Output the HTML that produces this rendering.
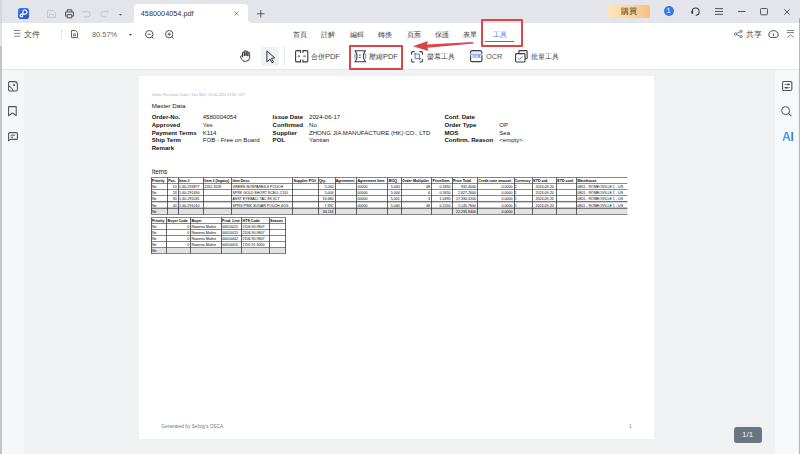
<!DOCTYPE html>
<html><head><meta charset="utf-8">
<style>
*{margin:0;padding:0;box-sizing:border-box}
html,body{width:800px;height:454px;overflow:hidden;background:#f0f1f3;font-family:"Liberation Sans",sans-serif;position:relative}
.a{position:absolute}
svg{position:absolute;overflow:visible}
.tabbar{left:0;top:0;width:800px;height:23px;background:#e4e5ea}
.toolbar{left:0;top:23px;width:800px;height:47px;background:#fff;border-bottom:1px solid #e6e7ea}
.t{position:absolute;white-space:nowrap;font-family:"Liberation Sans",sans-serif;line-height:1}
.cj{position:absolute;white-space:nowrap;font-size:7.4px;line-height:8px;color:#444;font-weight:500}
.content{left:0;top:70px;width:800px;height:384px;background:#f0f1f3}
.lside{left:2px;top:70px;width:22.3px;height:385px;background:#f5f6f8}
.rside{left:775px;top:70px;width:23px;height:385px;background:#f7f8fa}
.page{left:138.8px;top:76.4px;width:515.2px;height:362.3px;background:#fff}
</style></head><body>
<!-- tab bar -->
<div class="a tabbar"></div>
<div class="a" style="left:18px;top:8px;width:11px;height:10.8px;border-radius:2.8px;background:linear-gradient(135deg,#3b78f6,#2750dc)"></div>
<svg style="left:18px;top:8px" width="11" height="11" viewBox="0 0 11 11"><circle cx="3.5" cy="7.4" r="1.25" fill="none" stroke="#fff" stroke-width="1.2"/><path d="M4.4 6.5 L5.4 2.7 A2.05 2.05 0 1 1 6.5 6 L5.6 6.2" fill="none" stroke="#fff" stroke-width="1.2" stroke-linecap="round"/><circle cx="6.9" cy="4" r="0.7" fill="#1f3fb0"/></svg>
<!-- save disabled -->
<svg style="left:47px;top:10px" width="9" height="8" viewBox="0 0 9 8"><path d="M1 0.5 H6 L8.5 3 V7.5 H0.5 V1 Z M2.5 7.5 V4.5 H6.5 V7.5" fill="none" stroke="#c6c7cc" stroke-width="0.95"/></svg>
<!-- print -->
<svg style="left:64.5px;top:9px" width="9" height="9.5" viewBox="0 0 9 9.5"><path d="M2.2 3 V0.8 H6.8 V3 M1.8 7.2 H0.6 V3 H8.4 V7.2 H7.2 M2.2 5.6 H6.8 V8.8 H2.2 Z" fill="none" stroke="#505050" stroke-width="1" stroke-linejoin="round"/></svg>
<!-- undo/redo disabled -->
<svg style="left:82.3px;top:10.8px" width="9" height="6.5" viewBox="0 0 9 6.5"><path d="M0.6 0.7 H5.6 A2.55 2.55 0 0 1 5.6 5.8 H1.8" fill="none" stroke="#c4c5ca" stroke-width="1"/><path d="M0.6 0.7 L1.8 -0.1 M0.6 0.7 L1.8 1.5" stroke="#c4c5ca" stroke-width="0.8"/></svg>
<svg style="left:99.8px;top:10.8px" width="9" height="6.5" viewBox="0 0 9 6.5"><path d="M8.4 0.7 H3.4 A2.55 2.55 0 0 0 3.4 5.8 H7.2" fill="none" stroke="#c4c5ca" stroke-width="1"/><path d="M8.4 0.7 L7.2 -0.1 M8.4 0.7 L7.2 1.5" stroke="#c4c5ca" stroke-width="0.8"/></svg>
<svg style="left:119px;top:13.5px" width="3" height="2" viewBox="0 0 3 2"><path d="M0 0 H3 L1.5 1.8Z" fill="#555"/></svg>
<!-- doc tab -->
<div class="a" style="left:130px;top:19px;width:122px;height:4px;background:#fff"></div>
<div class="a" style="left:126px;top:15px;width:8px;height:8px;background:#e4e5ea;border-bottom-right-radius:4px"></div>
<div class="a" style="left:247.5px;top:15px;width:8px;height:8px;background:#e4e5ea;border-bottom-left-radius:4px"></div>
<div class="a" style="left:134px;top:4.3px;width:113.5px;height:19px;background:#fff;border-radius:4px 4px 0 0"></div>
<div class="t" style="left:140.8px;top:9.8px;font-size:7.3px;color:#333">4580004054.pdf</div>
<svg style="left:234px;top:11px" width="5" height="5" viewBox="0 0 5 5"><path d="M0.5 0.5 L4.5 4.5 M4.5 0.5 L0.5 4.5" stroke="#777" stroke-width="0.8"/></svg>
<svg style="left:256.75px;top:9.75px" width="7.5" height="7.5" viewBox="0 0 7.5 7.5"><path d="M3.75 0 V7.5 M0 3.75 H7.5" stroke="#444" stroke-width="0.85"/></svg>
<!-- buy button -->
<div class="a" style="left:608px;top:4.75px;width:42px;height:12.75px;border-radius:2.5px;background:linear-gradient(90deg,#fde6b8,#fbd29a 60%,#f9be86)"></div>
<div class="cj" style="left:620.5px;top:8.2px;font-size:7.6px;color:#4a3015">購買</div>
<!-- badge -->
<div class="a" style="left:663.5px;top:6.2px;width:10.2px;height:10.2px;border-radius:50%;background:#3a78ee"></div>
<div class="t" style="left:666.6px;top:7.3px;font-size:7.5px;color:#fff">1</div>
<!-- headset/refresh -->
<svg style="left:691.2px;top:6.5px" width="9.5" height="9.5" viewBox="0 0 9.5 9.5"><path d="M1.2 5.6 V4.4 A3.45 3.45 0 0 1 8.1 4.4 V5.2 Q8.1 8 5 8.3" fill="none" stroke="#3f3f3f" stroke-width="1.05" stroke-linecap="round"/><path d="M1.3 4.6 V5.9" stroke="#333" stroke-width="1.7" stroke-linecap="round"/></svg>
<!-- menu -->
<svg style="left:715px;top:8px" width="8" height="7" viewBox="0 0 8 7"><path d="M0 0.6 H8 M0 3.5 H8 M0 6.4 H8" stroke="#555" stroke-width="1"/></svg>
<svg style="left:737.5px;top:11px" width="7.5" height="1" viewBox="0 0 7.5 1"><path d="M0 0.5 H7.5" stroke="#555" stroke-width="1"/></svg>
<svg style="left:760px;top:7.75px" width="8" height="7" viewBox="0 0 8 7"><rect x="0.5" y="0.5" width="7" height="6.3" rx="1" fill="none" stroke="#555" stroke-width="1"/></svg>
<svg style="left:784px;top:8.5px" width="6" height="6" viewBox="0 0 6 6"><path d="M0.3 0.3 L5.7 5.7 M5.7 0.3 L0.3 5.7" stroke="#555" stroke-width="1"/></svg>
<div class="a" style="left:798.5px;top:17.5px;width:1.5px;height:6px;background:#aaa"></div>

<!-- toolbar -->
<div class="a toolbar"></div>
<div class="a content"></div>
<div class="a" style="left:0;top:0;width:1.5px;height:23px;background:#d6d7dc"></div>
<div class="a" style="left:0;top:23px;width:1.5px;height:23px;background:#e2e2e2"></div>
<div class="a" style="left:0;top:46px;width:2px;height:408px;background:#c4c4c4"></div>
<div class="a" style="left:798.5px;top:23px;width:1.5px;height:431px;background:#b8b8b8"></div>

<!-- row1 left -->
<svg style="left:14px;top:30.3px" width="6.4" height="7" viewBox="0 0 6.4 7"><path d="M0 0.5 H6.4 M0 3.35 H6.4 M0 6.2 H6.4" stroke="#666" stroke-width="0.8"/></svg>
<div class="cj" style="left:24.4px;top:30.7px;font-size:7.6px">文件</div>
<div class="a" style="left:61px;top:29px;width:1px;height:10px;background:#e3e3e6"></div>
<svg style="left:71px;top:30px" width="8" height="9" viewBox="0 0 8 9"><path d="M0.5 0.5 H4.5 L6.5 2.5 V7.5 H0.5 Z M2 4 H5 M2 5.7 H5" fill="none" stroke="#555" stroke-width="0.9"/><path d="M7 8 L7.8 8.8" stroke="#555" stroke-width="0.6"/></svg>
<div class="t" style="left:92px;top:30.5px;font-size:7.4px;color:#666">80.57%</div>
<svg style="left:129px;top:33.5px" width="3" height="2" viewBox="0 0 3 2"><path d="M0 0 H3 L1.5 1.8Z" fill="#333"/></svg>
<svg style="left:145px;top:30px" width="9" height="9" viewBox="0 0 9 9"><circle cx="4.2" cy="4.2" r="3.7" fill="none" stroke="#444" stroke-width="0.9"/><path d="M2.6 4.2 H5.8 M7 7 L8.6 8.6" stroke="#444" stroke-width="0.9"/></svg>
<svg style="left:165px;top:30px" width="9" height="9" viewBox="0 0 9 9"><circle cx="4.2" cy="4.2" r="3.7" fill="none" stroke="#444" stroke-width="0.9"/><path d="M2.6 4.2 H5.8 M4.2 2.6 V5.8 M7 7 L8.6 8.6" stroke="#444" stroke-width="0.9"/></svg>

<!-- menu tabs -->
<div class="cj" style="left:293px;top:31px">首頁</div>
<div class="cj" style="left:321px;top:31px">註解</div>
<div class="cj" style="left:350px;top:31px">編輯</div>
<div class="cj" style="left:378px;top:31px">轉換</div>
<div class="cj" style="left:407px;top:31px">頁面</div>
<div class="cj" style="left:435px;top:31px">保護</div>
<div class="cj" style="left:463px;top:31px">表單</div>
<div class="cj" style="left:492.7px;top:30.8px;color:#4f76e0">工具</div>
<div class="a" style="left:485px;top:40.6px;width:29px;height:1.2px;background:#4a6fd6"></div>
<!-- red box -->
<div class="a" style="left:481px;top:19px;width:42px;height:27.5px;border:2px solid #da4548;border-radius:1px"></div>

<!-- right share -->
<svg style="left:734px;top:30px" width="9" height="8" viewBox="0 0 9 8"><circle cx="1.6" cy="4" r="1.2" fill="none" stroke="#555" stroke-width="0.8"/><circle cx="7.2" cy="1.3" r="1.1" fill="none" stroke="#555" stroke-width="0.8"/><circle cx="7.2" cy="6.7" r="1.1" fill="none" stroke="#555" stroke-width="0.8"/><path d="M2.7 3.4 L6.2 1.8 M2.7 4.6 L6.2 6.2" stroke="#555" stroke-width="0.8"/></svg>
<div class="cj" style="left:746.3px;top:31px;font-size:7.7px">共享</div>
<svg style="left:767.8px;top:30.2px" width="11" height="8" viewBox="0 0 11 8"><path d="M0.8 5.1 C0.8 2.4 2.9 0.6 5.5 0.6 C8.1 0.6 10.2 2.4 10.2 5.1 C10.2 6.4 9.3 7.4 8 7.4 H3 C1.7 7.4 0.8 6.4 0.8 5.1 Z" fill="none" stroke="#444" stroke-width="0.95"/><path d="M5.5 6.2 V3.8" stroke="#444" stroke-width="0.8"/><path d="M4.5 4.5 L5.5 3.4 L6.5 4.5 Z" fill="#444"/></svg>
<svg style="left:786.5px;top:30px" width="7" height="8" viewBox="0 0 7 8"><path d="M0 0.5 H7 M0 2.5 H7 M0.3 7.5 L3.5 4.8 L6.7 7.5" fill="none" stroke="#666" stroke-width="0.8"/></svg>

<!-- row2 tools -->
<svg style="left:239.5px;top:50px" width="11" height="12" viewBox="0 0 11 12"><path d="M2.5 6.5 V2.8 A0.9 0.9 0 0 1 4.3 2.8 V5.5 M4.3 5.5 V1.4 A0.9 0.9 0 0 1 6.1 1.4 V5.5 M6.1 5.5 V2 A0.9 0.9 0 0 1 7.9 2 V5.8 M7.9 5.8 V3.2 A0.9 0.9 0 0 1 9.7 3.2 V7.5 A4 4 0 0 1 5.7 11.3 H5 A4 4 0 0 1 1.5 9.2 L0.5 7.2 A0.9 0.9 0 0 1 2.2 6.4 L2.5 7" fill="none" stroke="#333" stroke-width="0.95" stroke-linejoin="round" stroke-linecap="round"/></svg>
<div class="a" style="left:260.9px;top:47.1px;width:18.1px;height:18.5px;background:#f0f1f4;border-radius:1.5px"></div>
<svg style="left:265.6px;top:49.6px" width="10" height="13.5" viewBox="0 0 10 13.5"><path d="M0.9 0.9 L8.8 7.9 L5.5 8.3 L7.5 12 L6 12.8 L4.1 9.1 L0.9 11.9 Z" fill="none" stroke="#333" stroke-width="1" stroke-linejoin="round"/></svg>
<div class="a" style="left:284px;top:46px;width:1px;height:20px;background:#e6e7ea"></div>
<!-- merge -->
<svg style="left:295px;top:50px" width="13.5" height="12.5" viewBox="0 0 13.5 12.5"><path d="M5.5 3.1 V0.6 H1.5 A0.9 0.9 0 0 0 0.6 1.5 V11 A0.9 0.9 0 0 0 1.5 11.9 H5.5 V9.4 M7.9 3.1 V0.6 H11.9 A0.9 0.9 0 0 1 12.8 1.5 V11 A0.9 0.9 0 0 1 11.9 11.9 H7.9 V9.4" fill="none" stroke="#3a3a3a" stroke-width="1.1"/><path d="M2.2 6.25 L3.8 5.1 V7.4 Z M11.2 6.25 L9.6 5.1 V7.4 Z" fill="#6b8fe6"/><circle cx="4.3" cy="6.25" r="0.95" fill="#6b8fe6"/><circle cx="9.1" cy="6.25" r="0.95" fill="#6b8fe6"/></svg>
<div class="cj" style="left:311px;top:53px">合併PDF</div>
<!-- compress -->
<svg style="left:353.5px;top:50px" width="12.5" height="12.5" viewBox="0 0 12.5 12.5"><path d="M1 0.7 H11.5 Q9.4 3.2 9.4 6.25 Q9.4 9.3 11.5 11.8 H1 Q3.1 9.3 3.1 6.25 Q3.1 3.2 1 0.7 Z" fill="none" stroke="#3a3a3a" stroke-width="1.1" stroke-linejoin="round"/><path d="M1.2 3.8 Q0.2 6.25 1.2 8.7 M11.3 3.8 Q12.3 6.25 11.3 8.7" fill="none" stroke="#7fa4ee" stroke-width="1.3"/><path d="M4.8 5.2 H6.8 M4.8 7.4 H6.8" stroke="#444" stroke-width="0.9"/></svg>
<div class="cj" style="left:369px;top:53px">壓縮PDF</div>
<!-- red box 2 -->
<div class="a" style="left:348.5px;top:44.5px;width:54.5px;height:25px;border:2px solid #da4548;border-radius:1px"></div>
<!-- arrow -->
<svg style="left:410px;top:38px" width="66" height="16" viewBox="0 0 66 16"><path d="M3 8.3 L18 3 L17 6.6 L63 4 L63.5 5.6 L17.4 9.8 L18.5 13 Z" fill="#da4548"/></svg>
<!-- screenshot -->
<svg style="left:411.3px;top:50.6px" width="12" height="11.6" viewBox="0 0 12 11.6"><path d="M0.6 3.2 V1.6 A1 1 0 0 1 1.6 0.6 H3.2 M8.8 0.6 H10.4 A1 1 0 0 1 11.4 1.6 V3.2 M11.4 8.4 V10 A1 1 0 0 1 10.4 11 H8.8 M3.2 11 H1.6 A1 1 0 0 1 0.6 10 V8.4" fill="none" stroke="#3a3a3a" stroke-width="1.1" stroke-linecap="round"/><path d="M3.2 3.1 H8.6 V8.6 M4.1 2.2 V7.6 H9.6" fill="none" stroke="#4a72dc" stroke-width="0.9" stroke-linecap="round"/></svg>
<div class="cj" style="left:427px;top:53px">螢幕工具</div>
<!-- OCR -->
<svg style="left:470px;top:50.2px" width="12.5" height="12.2" viewBox="0 0 12.5 12.2"><rect x="2" y="1.7" width="8.6" height="1.8" fill="#d9e2f6"/><path d="M0.6 3.8 V2 A1.4 1.4 0 0 1 2 0.6 H10.3 A1.6 1.6 0 0 1 11.9 2.2 V3.8 M0.6 5.2 V10.2 A1.4 1.4 0 0 0 2 11.6 H10.5 A1.4 1.4 0 0 0 11.9 10.2 V5.2" fill="none" stroke="#3a3a3a" stroke-width="1.1"/><path d="M0 4.5 H12.5" stroke="#6a90e8" stroke-width="0.7"/><text x="6.25" y="8.4" font-size="3.6" font-family="Liberation Sans" font-weight="bold" fill="#3f6fe0" text-anchor="middle">OCR</text></svg>
<div class="t" style="left:486px;top:53px;font-size:7.4px;color:#555">OCR</div>
<!-- batch -->
<svg style="left:514.5px;top:50px" width="13" height="13" viewBox="0 0 13 13"><path d="M3.9 3.3 V1.4 A0.8 0.8 0 0 1 4.7 0.6 H11.3 A0.8 0.8 0 0 1 12.1 1.4 V7.9 A0.8 0.8 0 0 1 11.3 8.7 H10.2" fill="none" stroke="#3a3a3a" stroke-width="1.1"/><rect x="0.6" y="3.6" width="9.4" height="8.4" rx="0.9" fill="none" stroke="#3a3a3a" stroke-width="1.1"/><path d="M2.9 7.9 L4.6 9.4 L7.7 6.2" fill="none" stroke="#5b7fe0" stroke-width="0.95"/></svg>
<div class="cj" style="left:531px;top:53px">批量工具</div>

<div class="a lside"></div>
<div class="a rside"></div>
<!-- left side icons -->
<svg style="left:8.2px;top:81.2px" width="10" height="10.6" viewBox="0 0 10 10.6"><path d="M2 0.6 H6.6 A2.8 2.8 0 0 1 9.4 3.4 V8.6 A1.4 1.4 0 0 1 8 10 H2 A1.4 1.4 0 0 1 0.6 8.6 V2 A1.4 1.4 0 0 1 2 0.6 Z" fill="none" stroke="#555" stroke-width="1.1"/><path d="M0.8 5.1 Q4.2 6.2 5.4 10" fill="none" stroke="#555" stroke-width="1"/><circle cx="6.1" cy="4.1" r="1.05" fill="#555"/></svg>
<svg style="left:8.3px;top:106.2px" width="9" height="10.2" viewBox="0 0 9 10.2"><path d="M0.6 0.6 H8.2 V9.6 L4.4 7 L0.6 9.6 Z" fill="none" stroke="#555" stroke-width="1.1" stroke-linejoin="round"/></svg>
<svg style="left:8px;top:132px" width="10" height="9.2" viewBox="0 0 10 9.2"><path d="M1.6 0.6 H8.4 A1 1 0 0 1 9.4 1.6 V6.4 A1 1 0 0 1 8.4 7.4 H2.6 L0.6 8.8 V1.6 A1 1 0 0 1 1.6 0.6 Z" fill="none" stroke="#555" stroke-width="1.1" stroke-linejoin="round"/><path d="M2.8 3.2 H7 M2.8 5.2 H5" stroke="#555" stroke-width="1"/></svg>
<!-- right side icons -->
<svg style="left:781.7px;top:81px" width="10.4" height="10" viewBox="0 0 10.4 10"><rect x="0.55" y="0.55" width="9.3" height="8.9" rx="1.2" fill="none" stroke="#555" stroke-width="1.1"/><path d="M2.4 3.4 H8 M2.4 6.7 H8" stroke="#555" stroke-width="0.75"/><path d="M5.6 3.4 H6.8 M3.6 6.7 H4.8" stroke="#444" stroke-width="1.5" stroke-linecap="round"/></svg>
<svg style="left:781.4px;top:106.2px" width="10.8" height="10" viewBox="0 0 10.8 10"><circle cx="4.6" cy="4.6" r="4" fill="none" stroke="#555" stroke-width="1"/><path d="M7.6 7.6 L10 9.6" stroke="#555" stroke-width="1.1" stroke-linecap="round"/></svg>
<div class="t" style="left:782px;top:131.2px;font-size:12.4px;font-weight:bold;letter-spacing:-0.4px;background:linear-gradient(60deg,#3fb8f8,#2f6ee8);-webkit-background-clip:text;color:transparent">AI</div>
<!-- page badge -->
<div class="a" style="left:734px;top:427px;width:28px;height:15.5px;border-radius:3px;background:#6b7580"></div>
<div class="t" style="left:742px;top:431px;font-size:8px;color:#eef0f2">1/1</div>
<!-- page -->
<div class="a page"></div>
<!--PAGE-->
<div class="a" style="left:0;top:0;width:800px;height:454px">
<div class="t" style="left:151.70px;top:93.90px;font-size:3.6px;color:#b0b0b0;">Veltim |Purchase Order | Dist Bkd | 19.06.2024 23:39, CST</div>
<div class="t" style="left:151.70px;top:103.00px;font-size:6.2px;color:#151515;">Master Data</div>
<div class="t" style="left:151.70px;top:114.00px;font-size:6.1px;color:#111;font-weight:bold;">Order-No.</div>
<div class="t" style="left:202.70px;top:114.00px;font-size:6.1px;color:#222;">4580004054</div>
<div class="t" style="left:151.70px;top:121.80px;font-size:6.1px;color:#111;font-weight:bold;">Approved</div>
<div class="t" style="left:202.70px;top:121.80px;font-size:6.1px;color:#222;">Yes</div>
<div class="t" style="left:151.70px;top:129.60px;font-size:6.1px;color:#111;font-weight:bold;">Payment Terms</div>
<div class="t" style="left:202.70px;top:129.60px;font-size:6.1px;color:#222;">K114</div>
<div class="t" style="left:151.70px;top:137.40px;font-size:6.1px;color:#111;font-weight:bold;">Ship Term</div>
<div class="t" style="left:202.70px;top:137.40px;font-size:6.1px;color:#222;">FOB - Free on Board</div>
<div class="t" style="left:151.70px;top:145.20px;font-size:6.1px;color:#111;font-weight:bold;">Remark</div>
<div class="t" style="left:272.60px;top:114.00px;font-size:6.1px;color:#111;font-weight:bold;">Issue Date</div>
<div class="t" style="left:309.00px;top:114.00px;font-size:6.1px;color:#222;">2024-06-17</div>
<div class="t" style="left:444.40px;top:114.00px;font-size:6.1px;color:#111;font-weight:bold;">Conf. Date</div>
<div class="t" style="left:272.60px;top:121.80px;font-size:6.1px;color:#111;font-weight:bold;">Confirmed</div>
<div class="t" style="left:309.00px;top:121.80px;font-size:6.1px;color:#222;">No</div>
<div class="t" style="left:444.40px;top:121.80px;font-size:6.1px;color:#111;font-weight:bold;">Order Type</div>
<div class="t" style="left:499.20px;top:121.80px;font-size:6.1px;color:#222;">OP</div>
<div class="t" style="left:272.60px;top:129.60px;font-size:6.1px;color:#111;font-weight:bold;">Supplier</div>
<div class="t" style="left:309.00px;top:129.60px;font-size:6.1px;color:#222;">ZHONG JIA MANUFACTURE (HK) CO., LTD</div>
<div class="t" style="left:444.40px;top:129.60px;font-size:6.1px;color:#111;font-weight:bold;">MOS</div>
<div class="t" style="left:499.20px;top:129.60px;font-size:6.1px;color:#222;">Sea</div>
<div class="t" style="left:272.60px;top:137.40px;font-size:6.1px;color:#111;font-weight:bold;">POL</div>
<div class="t" style="left:309.00px;top:137.40px;font-size:6.1px;color:#222;">Yantian</div>
<div class="t" style="left:444.40px;top:137.40px;font-size:6.1px;color:#111;font-weight:bold;">Confirm. Reason</div>
<div class="t" style="left:499.20px;top:137.40px;font-size:6.1px;color:#222;">&lt;empty&gt;</div>
<div class="t" style="left:151.70px;top:169.20px;font-size:6.4px;color:#222;">Items</div>
<svg style="left:0;top:0" width="800" height="454" viewBox="0 0 800 454"><rect x="151.3" y="208.0" width="476.09999999999997" height="6.199999999999989" fill="#e2e2e2"/><rect x="151.3" y="200.9" width="476.09999999999997" height="1.8" fill="#bdbdbd"/><rect x="151.3" y="207.1" width="476.09999999999997" height="1.8" fill="#bdbdbd"/><line x1="151.3" y1="177.5" x2="627.4" y2="177.5" stroke="#555" stroke-width="0.7"/><line x1="151.3" y1="183.5" x2="627.4" y2="183.5" stroke="#555" stroke-width="0.7"/><line x1="151.3" y1="189.5" x2="627.4" y2="189.5" stroke="#555" stroke-width="0.7"/><line x1="151.3" y1="195.5" x2="627.4" y2="195.5" stroke="#555" stroke-width="0.7"/><line x1="151.3" y1="201.5" x2="627.4" y2="201.5" stroke="#555" stroke-width="0.7"/><line x1="151.3" y1="208.5" x2="627.4" y2="208.5" stroke="#555" stroke-width="0.7"/><line x1="151.3" y1="214.5" x2="627.4" y2="214.5" stroke="#555" stroke-width="0.7"/><line x1="151.5" y1="177.5" x2="151.5" y2="214.5" stroke="#333" stroke-width="0.75"/><line x1="167.5" y1="177.5" x2="167.5" y2="214.5" stroke="#333" stroke-width="0.75"/><line x1="178.5" y1="177.5" x2="178.5" y2="214.5" stroke="#333" stroke-width="0.75"/><line x1="203.5" y1="177.5" x2="203.5" y2="214.5" stroke="#333" stroke-width="0.75"/><line x1="231.5" y1="177.5" x2="231.5" y2="214.5" stroke="#333" stroke-width="0.75"/><line x1="292.5" y1="177.5" x2="292.5" y2="214.5" stroke="#333" stroke-width="0.75"/><line x1="318.5" y1="177.5" x2="318.5" y2="214.5" stroke="#333" stroke-width="0.75"/><line x1="335.5" y1="177.5" x2="335.5" y2="214.5" stroke="#333" stroke-width="0.75"/><line x1="356.5" y1="177.5" x2="356.5" y2="214.5" stroke="#333" stroke-width="0.75"/><line x1="387.5" y1="177.5" x2="387.5" y2="214.5" stroke="#333" stroke-width="0.75"/><line x1="401.5" y1="177.5" x2="401.5" y2="214.5" stroke="#333" stroke-width="0.75"/><line x1="431.5" y1="177.5" x2="431.5" y2="214.5" stroke="#333" stroke-width="0.75"/><line x1="452.5" y1="177.5" x2="452.5" y2="214.5" stroke="#333" stroke-width="0.75"/><line x1="477.5" y1="177.5" x2="477.5" y2="214.5" stroke="#333" stroke-width="0.75"/><line x1="514.5" y1="177.5" x2="514.5" y2="214.5" stroke="#333" stroke-width="0.75"/><line x1="532.5" y1="177.5" x2="532.5" y2="214.5" stroke="#333" stroke-width="0.75"/><line x1="556.5" y1="177.5" x2="556.5" y2="214.5" stroke="#333" stroke-width="0.75"/><line x1="576.5" y1="177.5" x2="576.5" y2="214.5" stroke="#333" stroke-width="0.75"/></svg>
<div class="t" style="left:152.00px;top:180.20px;font-size:3.6px;color:#000;font-weight:bold;">Priority</div>
<div class="t" style="left:168.20px;top:180.20px;font-size:3.6px;color:#000;font-weight:bold;">Pos.</div>
<div class="t" style="left:179.00px;top:180.20px;font-size:3.6px;color:#000;font-weight:bold;">Item #</div>
<div class="t" style="left:204.20px;top:180.20px;font-size:3.6px;color:#000;font-weight:bold;">Item # (legacy)</div>
<div class="t" style="left:232.40px;top:180.20px;font-size:3.6px;color:#000;font-weight:bold;">Item Desc.</div>
<div class="t" style="left:293.40px;top:180.20px;font-size:3.6px;color:#000;font-weight:bold;">Supplier PO#</div>
<div class="t" style="left:319.00px;top:180.20px;font-size:3.6px;color:#000;font-weight:bold;">Qty.</div>
<div class="t" style="left:335.70px;top:180.20px;font-size:3.6px;color:#000;font-weight:bold;">Agreement</div>
<div class="t" style="left:357.40px;top:180.20px;font-size:3.6px;color:#000;font-weight:bold;">Agreement Item</div>
<div class="t" style="left:388.40px;top:180.20px;font-size:3.6px;color:#000;font-weight:bold;">MOQ</div>
<div class="t" style="left:402.10px;top:180.20px;font-size:3.6px;color:#000;font-weight:bold;">Order Multiplier</div>
<div class="t" style="left:432.40px;top:180.20px;font-size:3.6px;color:#000;font-weight:bold;">Price/Item</div>
<div class="t" style="left:452.90px;top:180.20px;font-size:3.6px;color:#000;font-weight:bold;">Price Total</div>
<div class="t" style="left:478.20px;top:180.20px;font-size:3.6px;color:#000;font-weight:bold;">Credit note amount</div>
<div class="t" style="left:514.70px;top:180.20px;font-size:3.6px;color:#000;font-weight:bold;">Currency</div>
<div class="t" style="left:533.30px;top:180.20px;font-size:3.6px;color:#000;font-weight:bold;">ETD ord.</div>
<div class="t" style="left:557.30px;top:180.20px;font-size:3.6px;color:#000;font-weight:bold;">ETD conf.</div>
<div class="t" style="left:577.30px;top:180.20px;font-size:3.6px;color:#000;font-weight:bold;">Warehouse</div>
<div class="t" style="left:152.00px;top:186.10px;font-size:3.6px;color:#000;">Ne</div>
<div class="t" style="right:623.30px;top:186.10px;font-size:3.6px;color:#000;">10</div>
<div class="t" style="left:179.00px;top:186.10px;font-size:3.6px;color:#000;">1-60-293877</div>
<div class="t" style="left:204.20px;top:186.10px;font-size:3.6px;color:#000;">2261-3526</div>
<div class="t" style="left:232.40px;top:186.10px;font-size:3.6px;color:#000;">GREEN NONPAREILS POUCH</div>
<div class="t" style="right:466.60px;top:186.10px;font-size:3.6px;color:#000;">5.040</div>
<div class="t" style="left:357.40px;top:186.10px;font-size:3.6px;color:#000;">00000</div>
<div class="t" style="right:400.20px;top:186.10px;font-size:3.6px;color:#000;">5.040</div>
<div class="t" style="right:369.90px;top:186.10px;font-size:3.6px;color:#000;">48</div>
<div class="t" style="right:349.40px;top:186.10px;font-size:3.6px;color:#000;">0.1850</div>
<div class="t" style="right:324.10px;top:186.10px;font-size:3.6px;color:#000;">932.4000</div>
<div class="t" style="right:287.60px;top:186.10px;font-size:3.6px;color:#000;">0.0000</div>
<div class="t" style="left:514.70px;top:186.10px;font-size:3.6px;color:#000;">1</div>
<div class="t" style="left:532.60px;width:24.00px;text-align:center;top:186.10px;font-size:3.6px;color:#000">2024-09-20</div>
<div class="t" style="left:577.30px;top:186.10px;font-size:3.6px;color:#000;">0801 - ROMEOVILLE 1 - US</div>
<div class="t" style="left:152.00px;top:192.10px;font-size:3.6px;color:#000;">Ne</div>
<div class="t" style="right:623.30px;top:192.10px;font-size:3.6px;color:#000;">20</div>
<div class="t" style="left:179.00px;top:192.10px;font-size:3.6px;color:#000;">1-60-291490</div>
<div class="t" style="left:232.40px;top:192.10px;font-size:3.6px;color:#000;">SPRK GOLD SHORT SCELL CDU</div>
<div class="t" style="right:466.60px;top:192.10px;font-size:3.6px;color:#000;">5.004</div>
<div class="t" style="left:357.40px;top:192.10px;font-size:3.6px;color:#000;">00000</div>
<div class="t" style="right:400.20px;top:192.10px;font-size:3.6px;color:#000;">5.004</div>
<div class="t" style="right:369.90px;top:192.10px;font-size:3.6px;color:#000;">6</div>
<div class="t" style="right:349.40px;top:192.10px;font-size:3.6px;color:#000;">0.5650</div>
<div class="t" style="right:324.10px;top:192.10px;font-size:3.6px;color:#000;">2.827.2600</div>
<div class="t" style="right:287.60px;top:192.10px;font-size:3.6px;color:#000;">0.0000</div>
<div class="t" style="left:514.70px;top:192.10px;font-size:3.6px;color:#000;">1</div>
<div class="t" style="left:532.60px;width:24.00px;text-align:center;top:192.10px;font-size:3.6px;color:#000">2024-09-20</div>
<div class="t" style="left:577.30px;top:192.10px;font-size:3.6px;color:#000;">0801 - ROMEOVILLE 1 - US</div>
<div class="t" style="left:152.00px;top:198.30px;font-size:3.6px;color:#000;">Ne</div>
<div class="t" style="right:623.30px;top:198.30px;font-size:3.6px;color:#000;">30</div>
<div class="t" style="left:179.00px;top:198.30px;font-size:3.6px;color:#000;">1-60-291031</div>
<div class="t" style="left:232.40px;top:198.30px;font-size:3.6px;color:#000;">ASST EYEBALL TAC 8X 3CT</div>
<div class="t" style="right:466.60px;top:198.30px;font-size:3.6px;color:#000;">16.680</div>
<div class="t" style="left:357.40px;top:198.30px;font-size:3.6px;color:#000;">00000</div>
<div class="t" style="right:400.20px;top:198.30px;font-size:3.6px;color:#000;">5.001</div>
<div class="t" style="right:369.90px;top:198.30px;font-size:3.6px;color:#000;">3</div>
<div class="t" style="right:349.40px;top:198.30px;font-size:3.6px;color:#000;">1.0390</div>
<div class="t" style="right:324.10px;top:198.30px;font-size:3.6px;color:#000;">17.330.5200</div>
<div class="t" style="right:287.60px;top:198.30px;font-size:3.6px;color:#000;">0.0000</div>
<div class="t" style="left:514.70px;top:198.30px;font-size:3.6px;color:#000;">1</div>
<div class="t" style="left:532.60px;width:24.00px;text-align:center;top:198.30px;font-size:3.6px;color:#000">2024-09-20</div>
<div class="t" style="left:577.30px;top:198.30px;font-size:3.6px;color:#000;">0801 - ROMEOVILLE 1 - US</div>
<div class="t" style="left:152.00px;top:204.50px;font-size:3.6px;color:#000;">Ne</div>
<div class="t" style="right:623.30px;top:204.50px;font-size:3.6px;color:#000;">40</div>
<div class="t" style="left:179.00px;top:204.50px;font-size:3.6px;color:#000;">1-60-291010</div>
<div class="t" style="left:232.40px;top:204.50px;font-size:3.6px;color:#000;">SPRG PINK SUGAR POUCH 4OG</div>
<div class="t" style="right:466.60px;top:204.50px;font-size:3.6px;color:#000;">7.392</div>
<div class="t" style="left:357.40px;top:204.50px;font-size:3.6px;color:#000;">00000</div>
<div class="t" style="right:400.20px;top:204.50px;font-size:3.6px;color:#000;">5.040</div>
<div class="t" style="right:369.90px;top:204.50px;font-size:3.6px;color:#000;">48</div>
<div class="t" style="right:349.40px;top:204.50px;font-size:3.6px;color:#000;">0.1550</div>
<div class="t" style="right:324.10px;top:204.50px;font-size:3.6px;color:#000;">1.145.7600</div>
<div class="t" style="right:287.60px;top:204.50px;font-size:3.6px;color:#000;">0.0000</div>
<div class="t" style="left:514.70px;top:204.50px;font-size:3.6px;color:#000;">1</div>
<div class="t" style="left:532.60px;width:24.00px;text-align:center;top:204.50px;font-size:3.6px;color:#000">2024-09-20</div>
<div class="t" style="left:577.30px;top:204.50px;font-size:3.6px;color:#000;">0801 - ROMEOVILLE 1 - US</div>
<div class="t" style="left:152.00px;top:210.70px;font-size:3.6px;color:#000;">Ne</div>
<div class="t" style="right:466.60px;top:210.70px;font-size:3.6px;color:#000;">34.116</div>
<div class="t" style="right:324.10px;top:210.70px;font-size:3.6px;color:#000;">22.235.9400</div>
<div class="t" style="right:287.60px;top:210.70px;font-size:3.6px;color:#000;">0.0000</div>
<svg style="left:0;top:0" width="800" height="454" viewBox="0 0 800 454"><rect x="151.2" y="247.6" width="134.40000000000003" height="6.099999999999994" fill="#e2e2e2"/><line x1="151.2" y1="217.5" x2="285.6" y2="217.5" stroke="#555" stroke-width="0.7"/><line x1="151.2" y1="223.5" x2="285.6" y2="223.5" stroke="#555" stroke-width="0.7"/><line x1="151.2" y1="229.5" x2="285.6" y2="229.5" stroke="#555" stroke-width="0.7"/><line x1="151.2" y1="235.5" x2="285.6" y2="235.5" stroke="#555" stroke-width="0.7"/><line x1="151.2" y1="241.5" x2="285.6" y2="241.5" stroke="#555" stroke-width="0.7"/><line x1="151.2" y1="247.5" x2="285.6" y2="247.5" stroke="#555" stroke-width="0.7"/><line x1="151.2" y1="253.5" x2="285.6" y2="253.5" stroke="#555" stroke-width="0.7"/><line x1="151.5" y1="217.5" x2="151.5" y2="253.5" stroke="#333" stroke-width="0.75"/><line x1="166.5" y1="217.5" x2="166.5" y2="253.5" stroke="#333" stroke-width="0.75"/><line x1="190.5" y1="217.5" x2="190.5" y2="253.5" stroke="#333" stroke-width="0.75"/><line x1="221.5" y1="217.5" x2="221.5" y2="253.5" stroke="#333" stroke-width="0.75"/><line x1="241.5" y1="217.5" x2="241.5" y2="253.5" stroke="#333" stroke-width="0.75"/><line x1="269.5" y1="217.5" x2="269.5" y2="253.5" stroke="#333" stroke-width="0.75"/><line x1="285.5" y1="217.5" x2="285.5" y2="253.5" stroke="#333" stroke-width="0.75"/></svg>
<div class="t" style="left:151.90px;top:219.70px;font-size:3.6px;color:#000;font-weight:bold;">Priority</div>
<div class="t" style="left:167.60px;top:219.70px;font-size:3.6px;color:#000;font-weight:bold;">Buyer Code</div>
<div class="t" style="left:191.50px;top:219.70px;font-size:3.6px;color:#000;font-weight:bold;">Buyer</div>
<div class="t" style="left:222.10px;top:219.70px;font-size:3.6px;color:#000;font-weight:bold;">Prod. Line</div>
<div class="t" style="left:242.60px;top:219.70px;font-size:3.6px;color:#000;font-weight:bold;">HTS Code</div>
<div class="t" style="left:270.10px;top:219.70px;font-size:3.6px;color:#000;font-weight:bold;">Season</div>
<div class="t" style="left:151.90px;top:225.90px;font-size:3.6px;color:#000;">Ne</div>
<div class="t" style="right:610.80px;top:225.90px;font-size:3.6px;color:#000;">0</div>
<div class="t" style="left:191.50px;top:225.90px;font-size:3.6px;color:#000;">Rowena Malins</div>
<div class="t" style="left:222.10px;top:225.90px;font-size:3.6px;color:#000;">00010015</div>
<div class="t" style="left:242.60px;top:225.90px;font-size:3.6px;color:#000;">2106.90.9807</div>
<div class="t" style="left:151.90px;top:232.10px;font-size:3.6px;color:#000;">Ne</div>
<div class="t" style="right:610.80px;top:232.10px;font-size:3.6px;color:#000;">0</div>
<div class="t" style="left:191.50px;top:232.10px;font-size:3.6px;color:#000;">Rowena Malins</div>
<div class="t" style="left:222.10px;top:232.10px;font-size:3.6px;color:#000;">00010015</div>
<div class="t" style="left:242.60px;top:232.10px;font-size:3.6px;color:#000;">2106.90.9807</div>
<div class="t" style="left:151.90px;top:238.30px;font-size:3.6px;color:#000;">Ne</div>
<div class="t" style="right:610.80px;top:238.30px;font-size:3.6px;color:#000;">0</div>
<div class="t" style="left:191.50px;top:238.30px;font-size:3.6px;color:#000;">Rowena Malins</div>
<div class="t" style="left:222.10px;top:238.30px;font-size:3.6px;color:#000;">00010002</div>
<div class="t" style="left:242.60px;top:238.30px;font-size:3.6px;color:#000;">2106.90.9807</div>
<div class="t" style="left:151.90px;top:244.40px;font-size:3.6px;color:#000;">Ne</div>
<div class="t" style="right:610.80px;top:244.40px;font-size:3.6px;color:#000;">0</div>
<div class="t" style="left:191.50px;top:244.40px;font-size:3.6px;color:#000;">Rowena Malins</div>
<div class="t" style="left:222.10px;top:244.40px;font-size:3.6px;color:#000;">00010015</div>
<div class="t" style="left:242.60px;top:244.40px;font-size:3.6px;color:#000;">1701.91.3000</div>
<div class="t" style="left:151.90px;top:250.30px;font-size:3.6px;color:#000;">Ne</div>
<div class="t" style="left:161.25px;top:424.80px;font-size:4.8px;color:#777;">Generated by Sellog's OSCA</div>
<div class="t" style="left:629.00px;top:424.80px;font-size:4.8px;color:#777;">1</div>
</div>
<!--/PAGE-->
</body></html>
